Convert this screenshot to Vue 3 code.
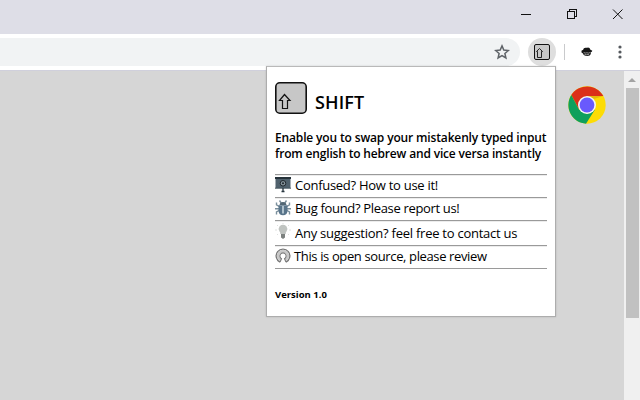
<script setup>
const links = [
  { id: 'help', text: 'Confused? How to use it!' },
  { id: 'bug', text: 'Bug found? Please report us!' },
  { id: 'idea', text: 'Any suggestion? feel free to contact us' },
  { id: 'source', text: 'This is open source, please review' }
]
</script>

<template>
  <div class="window">
    <header class="titlebar">
      <svg width="120" height="34" viewBox="0 0 120 34" fill="none" stroke="#111" shape-rendering="crispEdges">
        <path d="M7 14.500h10M53.500 11.500h7v7h-7zM55.500 11.500v-2h7v7h-2" />
        <path d="M99 9.500l9.500 9.500M108.500 9.500l-9.500 9.500" shape-rendering="auto" />
      </svg>
    </header>
    <div class="toolbar">
      <div class="omnibox">
        <svg width="16" height="16" viewBox="0 0 16 16" fill="none" stroke="#5f6368" stroke-width="1.500">
          <path d="M8 1.900l1.800 4.200 4.500.4-3.400 3 1 4.500L8 11.600 4.100 14l1-4.500-3.400-3 4.500-.4z" />
        </svg>
      </div>
      <div class="extension">
        <svg width="16" height="16" viewBox="0 0 16 16" fill="none" stroke="#111">
          <rect x=".5" y=".5" width="15" height="15" rx="1.500" fill="#c8c8c8" />
          <path d="M3.500 7.500h-1l3-3 3 3h-1v6h-4z" stroke-width=".9" />
        </svg>
      </div>
      <i class="divider"></i>
      <svg class="avatar" width="12" height="10" viewBox="0 0 12 10">
        <path d="M.5 3.800Q1 3.200 2 3Q2.500 .8 4.500 .8Q6 1 7 .6Q9 .7 9.200 2.600L11.300 3.700Q11 5 9.900 5.200Q10 8.300 7.500 8.800Q2.500 9.300 2 6.500L.5 5.500z" fill="#151515" />
        <path d="M2.700 5.500q1.500 1 3 .3q2 .8 3.800-.4M3.600 7.500q2 .6 4.500-.2" fill="none" stroke="#b5b5b5" stroke-width=".8" />
      </svg>
      <svg class="menu" width="4" height="14" viewBox="0 0 4 14" fill="#55595e">
        <circle cx="2" cy="2" r="1.600" /><circle cx="2" cy="7" r="1.600" /><circle cx="2" cy="12" r="1.600" />
      </svg>
    </div>
    <div class="content">
      <main class="page">
        <svg width="38" height="38" viewBox="0 0 38 38">
          <circle cx="19" cy="19" r="18.700" fill="#fddc05" />
          <path d="M3.300 9A18.700 18.700 0 0 1 35.300 10H19L11 23.500z" fill="#db3019" />
          <path d="M3.300 9A18.700 18.700 0 0 0 18 37.700L27 23.500L19 28L11 23.500z" fill="#0fa05c" />
          <path d="M19 10h16.300l-9.500 3z" fill="#e6b90b" />
          <circle cx="19" cy="19" r="9" fill="#f4f4f4" />
          <circle cx="19" cy="19" r="7.400" fill="#695afd" />
        </svg>
      </main>
      <aside class="scrollbar"><i class="arrow"></i><i class="thumb"></i></aside>
    </div>

    <section class="popup">
      <div class="brand">
        <svg width="32" height="32" viewBox="0 0 32 32" fill="none" stroke="#111">
          <rect x=".8" y=".8" width="30.400" height="30.400" rx="4" fill="#c7c7c7" stroke-width="1.600" />
          <path d="M4.500 18.500l5-6 5.500 6h-2.500v8h-5v-8z" stroke-width="1.200" />
        </svg>
        <h1>SHIFT</h1>
      </div>
      <p class="about"><span class="l1">Enable you to swap your mistakenly typed input</span><span class="l2">from english to hebrew and vice versa instantly</span></p>
      <ul>
        <li v-for="link in links" :key="link.id" :class="link.id">
          <svg width="16" height="16" viewBox="0 0 16 16">
            <template v-if="link.id === 'help'">
              <path d="M0 0h16v2H0z" fill="#253139" />
              <path d="M.5 2h15v9H.5z" fill="#50616d" />
              <circle cx="8" cy="6.300" r="2.800" fill="#84929a" stroke="#20282d" />
              <circle cx="8" cy="6.300" r="1" fill="#20282d" />
              <path d="M0 11.200h16" stroke="#40515c" stroke-width="1" />
              <path d="M8 11v3M6.500 14.500h3" stroke="#293740" stroke-width="1.300" />
            </template>
            <template v-else-if="link.id === 'bug'">
              <path d="M4.500 .5l2 3M11.500 .5l-2 3M1.500 2.500v2.300L5 7M14.500 2.500v2.300L11 7M0 8.700h16M1.500 14.500V12L5 10M14.500 14.500V12L11 10" fill="none" stroke="#7b909d" stroke-width="1.400" />
              <path d="M4.500 5Q5 2 8 2T11.500 5z" fill="#526775" />
              <path d="M3.500 5.300h9V11Q12 15.300 8 15.300T3.500 11z" fill="#58748a" />
              <path d="M8 6v7.500" stroke="#c6d5dd" stroke-width="1.600" />
            </template>
            <template v-else-if="link.id === 'idea'">
              <path d="M8 0v1M2 2l1 1M14 2l-1 1M0 7h2M14 7h2M2 12l1-1M14 12l-1-1" stroke="#dfe1df" />
              <path d="M5.300 11Q5.500 9.500 4.400 8.300Q2.800 5.500 4.600 3.200Q8 .4 11.400 3.200Q13.200 5.500 11.600 8.300Q10.500 9.500 10.700 11z" fill="#c0c4c1" />
              <path d="M6 11h4v3.500L8 16l-2-1.500z" fill="#7c817f" />
            </template>
            <template v-else>
              <path d="M5 14A6.800 6.800 0 1 1 11 14" fill="none" stroke="#777" stroke-width="1.400" />
              <path d="M5.500 12.100A4.900 4.900 0 1 1 10.500 12.100" fill="none" stroke="#c8c8c8" stroke-width="2.600" />
              <path d="M5 14.100L6.500 10.700A3.100 3.100 0 1 1 9.500 10.700L11 14.100" fill="none" stroke="#777" stroke-width="1.100" />
            </template>
          </svg>
          <span>{{ link.text }}</span>
        </li>
      </ul>
      <p class="version">Version 1.0</p>
    </section>
  </div>
</template>

<style>
body { margin: 0; overflow: hidden; }
</style>

<style scoped>
* { box-sizing: border-box; }
svg { display: block; flex: none; }
.window { position: relative; width: 640px; height: 400px; display: flex; flex-direction: column; overflow: hidden; background: #d6d6d6; font-family: "Open Sans", "Noto Sans", sans-serif; color: #000; }
.titlebar { height: 34px; flex: none; display: flex; justify-content: flex-end; padding-right: 6px; background: #dedee7; }
.toolbar { height: 36px; flex: none; display: flex; align-items: center; background: #fff; }
.omnibox { width: 520px; height: 28px; border-radius: 0 14px 14px 0; background: #f1f3f4; display: flex; align-items: center; justify-content: flex-end; padding-right: 10px; }
.extension { width: 28px; height: 28px; margin-left: 8px; border-radius: 50%; background: #dedede; display: grid; place-items: center; }
.divider { width: 1px; height: 16px; margin-left: 8px; background: #c9cacc; }
.avatar { margin-left: 16px; }
.menu { margin-left: 25px; }
.content { flex: 1; display: flex; border-top: 1px solid #d0d0dc; }
.page { flex: 1; display: flex; justify-content: flex-end; padding: 15px 18px 0 0; }
.scrollbar { width: 16px; background: #f0f0f0; display: flex; flex-direction: column; align-items: center; }
.arrow { border: 4px solid transparent; border-top-width: 0; border-bottom-color: #a3a3a3; margin-top: 7px; }
.thumb { width: 13px; height: 230px; margin-top: 6px; background: #c1c1c1; }
.popup { position: absolute; left: 266px; top: 66px; width: 290px; height: 251px; padding: 15px 8px 0; background: #fff; border: 1px solid #adadad; border-top-color: #b9b9b9; box-shadow: 0 0 2px rgba(0, 0, 0, .14); }
.brand { display: flex; height: 42px; }
h1 { margin: 7px 0 0 8px; font-size: 18px; line-height: 26px; font-weight: 600; letter-spacing: .15px; }
.about { margin: 6px 0 12px; font-size: 12px; line-height: 16px; font-weight: 650; white-space: nowrap; }
.about span { display: block; letter-spacing: -.15px; }
.about .l2 { letter-spacing: -.17px; }
ul { list-style: none; margin: 0; padding: 0; border-bottom: 1px solid #9a9a9a; height: 95px; }
li { height: 23px; display: flex; border-top: 1px solid #9a9a9a; box-shadow: inset 0 1px #ececec; padding-top: 2px; font-size: 13px; line-height: 18px; white-space: nowrap; letter-spacing: -.28px; }
li span { margin: -1px 0 0 4px; }
li.bug { letter-spacing: -.33px; }
li.idea { height: 25px; letter-spacing: -.25px; }
li.idea span { margin-top: 1px; }
li.source { letter-spacing: -.37px; }
li.source span { margin-left: 3px; }
.version { margin: 19px 0 0; font-size: 9.500px; line-height: 14px; font-weight: 700; }
</style>
